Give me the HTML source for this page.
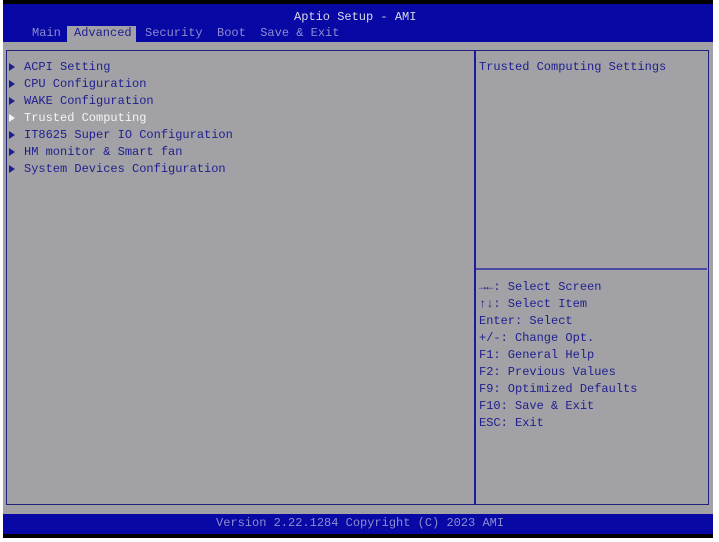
<!DOCTYPE html>
<html><head><meta charset="utf-8"><style>
body{margin:0;width:719px;height:542px;background:#fff;position:relative;overflow:hidden;font-family:"Liberation Mono","DejaVu Sans Mono",monospace;font-size:12px}
.abs{position:absolute;white-space:pre;line-height:17px}
#scr{position:absolute;left:3px;top:0;width:710px;height:538px;background:#000}
#hdr{position:absolute;left:3px;top:4px;width:710px;height:38px;background:#0808a4}
#body{position:absolute;left:3px;top:42px;width:710px;height:472px;background:#a2a2a6}
#ftr{position:absolute;left:3px;top:514px;width:710px;height:20px;background:#0808a4}
#frame{position:absolute;left:6px;top:50px;width:703px;height:455px;border:1px solid #22227a;box-sizing:border-box}
#div{position:absolute;left:474px;top:50px;width:2px;height:455px;background:#1a1aa0}
#hl{position:absolute;left:476px;top:268px;width:231px;height:2px;background:#4a4aa0}
.b{color:#1e1e8e}
.w{color:#f4f4f4}
.tab{color:#8c8cd0}
.tri{display:inline-block;width:0;height:0;border-top:4px solid transparent;border-bottom:4px solid transparent;border-left:6px solid #1e1e8e;margin-right:9px;vertical-align:-1px}
.tri.wt{border-left-color:#f4f4f4}
</style></head><body>
<div id="scr"></div><div id="hdr"></div><div id="body"></div><div id="ftr"></div>
<div class="abs" style="left:294px;top:9px;color:#d8d8e8">Aptio Setup - AMI</div>
<div style="position:absolute;left:67px;top:26px;width:69px;height:16px;background:#a2a2a6"></div>
<div class="abs tab" style="left:32px;top:25px">Main</div>
<div class="abs" style="left:74px;top:25px;color:#1e1e8e">Advanced</div>
<div class="abs tab" style="left:145px;top:25px">Security  Boot  Save &amp; Exit</div>
<div id="frame"></div><div id="div"></div><div id="hl"></div>
<div class="abs b" style="left:9px;top:59px"><span class="tri"></span>ACPI Setting
<span class="tri"></span>CPU Configuration
<span class="tri"></span>WAKE Configuration
<span class="w"><span class="tri wt"></span>Trusted Computing</span>
<span class="tri"></span>IT8625 Super IO Configuration
<span class="tri"></span>HM monitor &amp; Smart fan
<span class="tri"></span>System Devices Configuration</div>
<div class="abs b" style="left:479px;top:59px">Trusted Computing Settings</div>
<div class="abs b" style="left:479px;top:279px">&#8594;&#8592;: Select Screen
&#8593;&#8595;: Select Item
Enter: Select
+/-: Change Opt.
F1: General Help
F2: Previous Values
F9: Optimized Defaults
F10: Save &amp; Exit
ESC: Exit</div>
<div class="abs" style="left:216px;top:515px;color:#8c8cd0">Version 2.22.1284 Copyright (C) 2023 AMI</div>
</body></html>
